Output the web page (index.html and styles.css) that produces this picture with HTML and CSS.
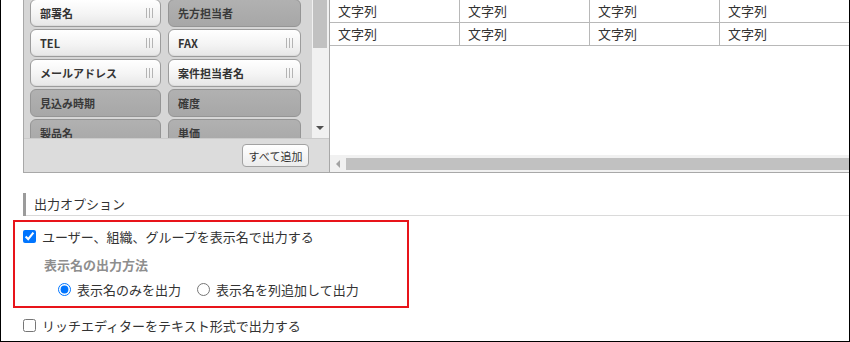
FILE: index.html
```html
<!DOCTYPE html>
<html lang="ja">
<head>
<meta charset="utf-8">
<link rel="stylesheet" href="styles.css">
</head>
<body>
<div class="frame">
  <div class="picker">
    <div class="source">
      <div class="source-list">
        <div class="chips">
          <div class="chip on"><span>部署名</span><i class="grip"></i></div>
          <div class="chip off"><span>先方担当者</span></div>
          <div class="chip on"><span>TEL</span><i class="grip"></i></div>
          <div class="chip on"><span>FAX</span><i class="grip"></i></div>
          <div class="chip on"><span>メールアドレス</span><i class="grip"></i></div>
          <div class="chip on"><span>案件担当者名</span><i class="grip"></i></div>
          <div class="chip off"><span>見込み時期</span></div>
          <div class="chip off"><span>確度</span></div>
          <div class="chip off"><span>製品名</span></div>
          <div class="chip off"><span>単価</span></div>
        </div>
        <div class="vscroll">
          <div class="vthumb"></div>
          <div class="vspace"></div>
          <div class="arrow-down"></div>
        </div>
      </div>
      <div class="source-bar">
        <button class="add-all" type="button">すべて追加</button>
      </div>
    </div>
    <div class="target">
      <div class="grid">
        <div class="row">
          <div class="cell">文字列</div><div class="cell">文字列</div><div class="cell">文字列</div><div class="cell">文字列</div>
        </div>
        <div class="row">
          <div class="cell">文字列</div><div class="cell">文字列</div><div class="cell">文字列</div><div class="cell">文字列</div>
        </div>
      </div>
      <div class="hscroll">
        <div class="arrow-left"></div>
        <div class="hthumb"></div>
      </div>
    </div>
  </div>

  <div class="section-title"><span>出力オプション</span></div>

  <div class="highlight">
    <label class="opt-row first">
      <input type="checkbox" checked>
      <span>ユーザー、組織、グループを表示名で出力する</span>
    </label>
    <div class="sub-title">表示名の出力方法</div>
    <div class="radio-row">
      <label class="radio"><input type="radio" name="m" checked><span>表示名のみを出力</span></label>
      <label class="radio"><input type="radio" name="m"><span>表示名を列追加して出力</span></label>
    </div>
  </div>

  <label class="opt-row last">
    <input type="checkbox">
    <span>リッチエディターをテキスト形式で出力する</span>
  </label>
</div>
</body>
</html>
```

FILE: styles.css
```css
* { box-sizing: border-box; }
html, body { margin: 0; padding: 0; background: #fff; }
body {
  font-family: "Noto Sans CJK JP", "Noto Sans", sans-serif;
  color: #333;
}
.frame {
  width: 850px;
  height: 342px;
  border: 1px solid #000;
  border-top: none;
  overflow: hidden;
}

/* ---------- picker ---------- */
.picker {
  display: flex;
  height: 173px;
  margin-left: 22px;
  border-bottom: 1px solid #a8a8a8;
}
.source {
  width: 306px;
  flex: none;
  display: flex;
  flex-direction: column;
  border-left: 1px solid #a8a8a8;
}
.source-list {
  height: 138px;
  display: flex;
  background: #d6d6d6;
  overflow: hidden;
}
.chips {
  display: grid;
  grid-template-columns: 131px 133px;
  grid-auto-rows: 28px;
  column-gap: 7px;
  row-gap: 2px;
  padding-left: 6px;
  margin-top: -1px;
  margin-right: 11px;
}
.chip {
  display: flex;
  align-items: center;
  justify-content: space-between;
  padding: 0 7px 0 9px;
  border-radius: 6px;
  font-size: 11px;
  font-weight: bold;
  color: #333;
  white-space: nowrap;
}
.chip.on {
  border: 1px solid #9c9c9c;
  background: linear-gradient(#ffffff, #f4f4f4 55%, #e6e6e6);
  box-shadow: inset 0 -1px 0 #dcdcdc;
}
.chip.off {
  border: 1px solid #959595;
  background: linear-gradient(#b1b1b1, #a7a7a7);
  color: #3a3a3a;
}
.grip {
  width: 7px;
  height: 10px;
  background: repeating-linear-gradient(to right, #b4b4b4 0 1px, transparent 1px 3px);
}
.vscroll {
  width: 17px;
  flex: none;
  display: flex;
  flex-direction: column;
  background: #f1f1f1;
  padding: 0 2px 0 1px;
}
.vthumb {
  height: 48px;
  background: #c1c1c1;
}
.vspace { flex: 1; }
.arrow-down {
  align-self: center;
  width: 0;
  height: 0;
  border-left: 4px solid transparent;
  border-right: 4px solid transparent;
  border-top: 4px solid #505050;
  margin-bottom: 8px;
}
.source-bar {
  flex: 1;
  display: flex;
  align-items: center;
  justify-content: flex-end;
  padding-right: 20px;
  background: #dcdcdc;
  border-top: 1px solid #cbcbcb;
}
.add-all {
  height: 23px;
  width: 67px;
  padding: 0;
  font-family: inherit;
  font-size: 11px;
  color: #333;
  border: 1px solid #a2a2a2;
  border-radius: 4px;
  background: linear-gradient(#ffffff, #ececec);
}

.target {
  flex: 1;
  min-width: 0;
  display: flex;
  flex-direction: column;
  border-left: 1px solid #a8a8a8;
  background: #fff;
  overflow: hidden;
}
.grid {
  flex: 1;
}
.row {
  display: flex;
  height: 23px;
  border-bottom: 1px solid #b8b8b8;
  width: 520px;
}
.row:first-child { height: 23px; }
.cell {
  width: 130px;
  flex: none;
  border-right: 1px solid #b8b8b8;
  padding-left: 8px;
  font-size: 13px;
  line-height: 22px;
  color: #333;
}
.hscroll {
  height: 17px;
  flex: none;
  display: flex;
  align-items: center;
  background: #f1f1f1;
}
.arrow-left {
  width: 0;
  height: 0;
  border-top: 4px solid transparent;
  border-bottom: 4px solid transparent;
  border-right: 4px solid #a3a3a3;
  margin-left: 6px;
  margin-right: 6px;
}
.hthumb {
  flex: 1;
  height: 12px;
  background: #c1c1c1;
}

/* ---------- options ---------- */
.section-title {
  margin: 20px 0 0 22px;
  height: 23px;
  display: flex;
  align-items: stretch;
  border-left: 3px solid #9b9b9b;
}
.section-title span {
  flex: 1;
  font-size: 13px;
  line-height: 21px;
  padding-left: 8px;
  border-bottom: 1px solid #dadada;
}
.highlight {
  margin: 4px 0 0 12px;
  width: 396px;
  height: 88px;
  border: 2px solid #e8141a;
  padding: 4px 0 0 0;
}
.opt-row {
  display: flex;
  align-items: center;
  height: 20px;
  font-size: 13px;
  color: #333;
}
.opt-row input {
  width: 13px;
  height: 13px;
  margin: 0 6px 0 0;
}
.opt-row.first { padding-left: 8px; }
.opt-row.last { margin: 7px 0 0 22px; }
.sub-title {
  margin: 9px 0 0 29px;
  height: 20px;
  line-height: 20px;
  font-size: 13px;
  font-weight: bold;
  color: #8e8e8e;
}
.radio-row {
  display: flex;
  align-items: center;
  height: 20px;
  margin-top: 4px;
  padding-left: 43px;
  gap: 16px;
}
.radio {
  display: flex;
  align-items: center;
  font-size: 13px;
  color: #333;
}
.radio input {
  width: 13px;
  height: 13px;
  margin: 0 6px 0 0;
}
```
